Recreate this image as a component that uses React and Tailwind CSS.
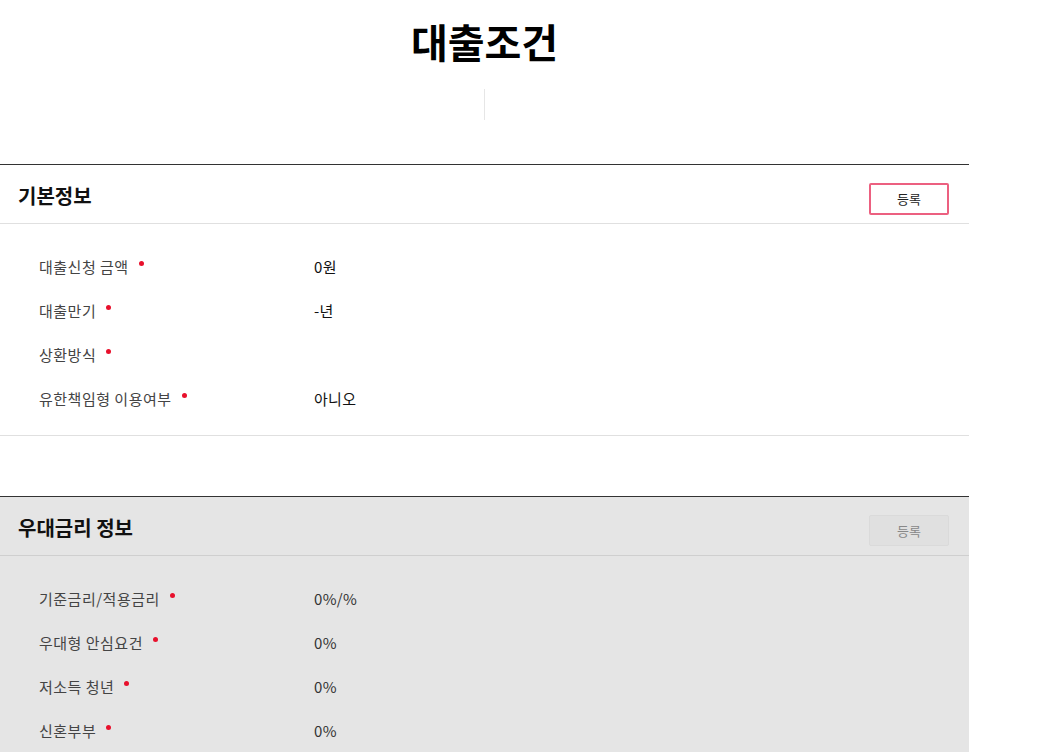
const basic = [
  { label: '대출신청 금액', value: '0원' },
  { label: '대출만기', value: '-년' },
  { label: '상환방식', value: '' },
  { label: '유한책임형 이용여부', value: '아니오' },
]

const rates = [
  { label: '기준금리/적용금리', value: '0%/%' },
  { label: '우대형 안심요건', value: '0%' },
  { label: '저소득 청년', value: '0%' },
  { label: '신혼부부', value: '0%' },
]

function Row({ label, value, strong }) {
  return (
    <div className="flex h-[44px] items-center">
      <div className="flex w-[314px] items-center pl-[39px] text-[15px] tracking-[0.5px] text-[#444]">
        <span>{label}</span>
        <span className="ml-[10px] -mt-[8px] h-[5px] w-[5px] rounded-full bg-[#e8102c]" />
      </div>
      <div className={'text-[15px] tracking-[0.3px] ' + (strong ? 'text-[#111]' : 'text-[#333]')}>{value}</div>
    </div>
  )
}

function Section({ title, rows, disabled, strong }) {
  return (
    <section className={'border-y ' + (disabled ? 'border-t-[#333] border-b-[#cfcfcf] bg-[#e5e5e5]' : 'border-t-[#333] border-b-[#e0e0e0] bg-white')}>
      <div className={'flex h-[59px] items-center justify-between border-b pl-[18px] pr-[20px] ' + (disabled ? 'border-[#cfcfcf]' : 'border-[#e0e0e0]')}>
        <h2 className="mt-[3px] text-[20px] font-bold text-[#111]">{title}</h2>
        {disabled ? (
          <button className="mt-[9px] h-[31px] w-[80px] rounded-[2px] border border-[#dadada] bg-[#e0e0e0] text-[13px] text-[#888]">등록</button>
        ) : (
          <button className="mt-[9px] h-[32px] w-[80px] rounded-[2px] border-2 border-[#ec6080] bg-white text-[13px] text-[#222]">등록</button>
        )}
      </div>
      <div className="pt-[21px] pb-[14px]">
        {rows.map(r => <Row key={r.label} {...r} strong={strong} />)}
      </div>
    </section>
  )
}

export default function App() {
  return (
    <div className="min-h-[752px] bg-white" style={{ fontFamily: '"Noto Sans CJK KR", "Noto Sans", sans-serif' }}>
      <div className="w-[969px]">
        <div className="flex flex-col items-center pt-[12px]">
          <h1 className="text-[40px] font-bold leading-[58px] text-black">대출조건</h1>
          <div className="mt-[19px] h-[31px] w-px bg-[#e6e6e6]" />
        </div>
        <div className="mt-[44px]">
          <Section title="기본정보" rows={basic} strong />
        </div>
        <div className="mt-[60px]">
          <Section title="우대금리 정보" rows={rates} disabled />
        </div>
      </div>
    </div>
  )
}
